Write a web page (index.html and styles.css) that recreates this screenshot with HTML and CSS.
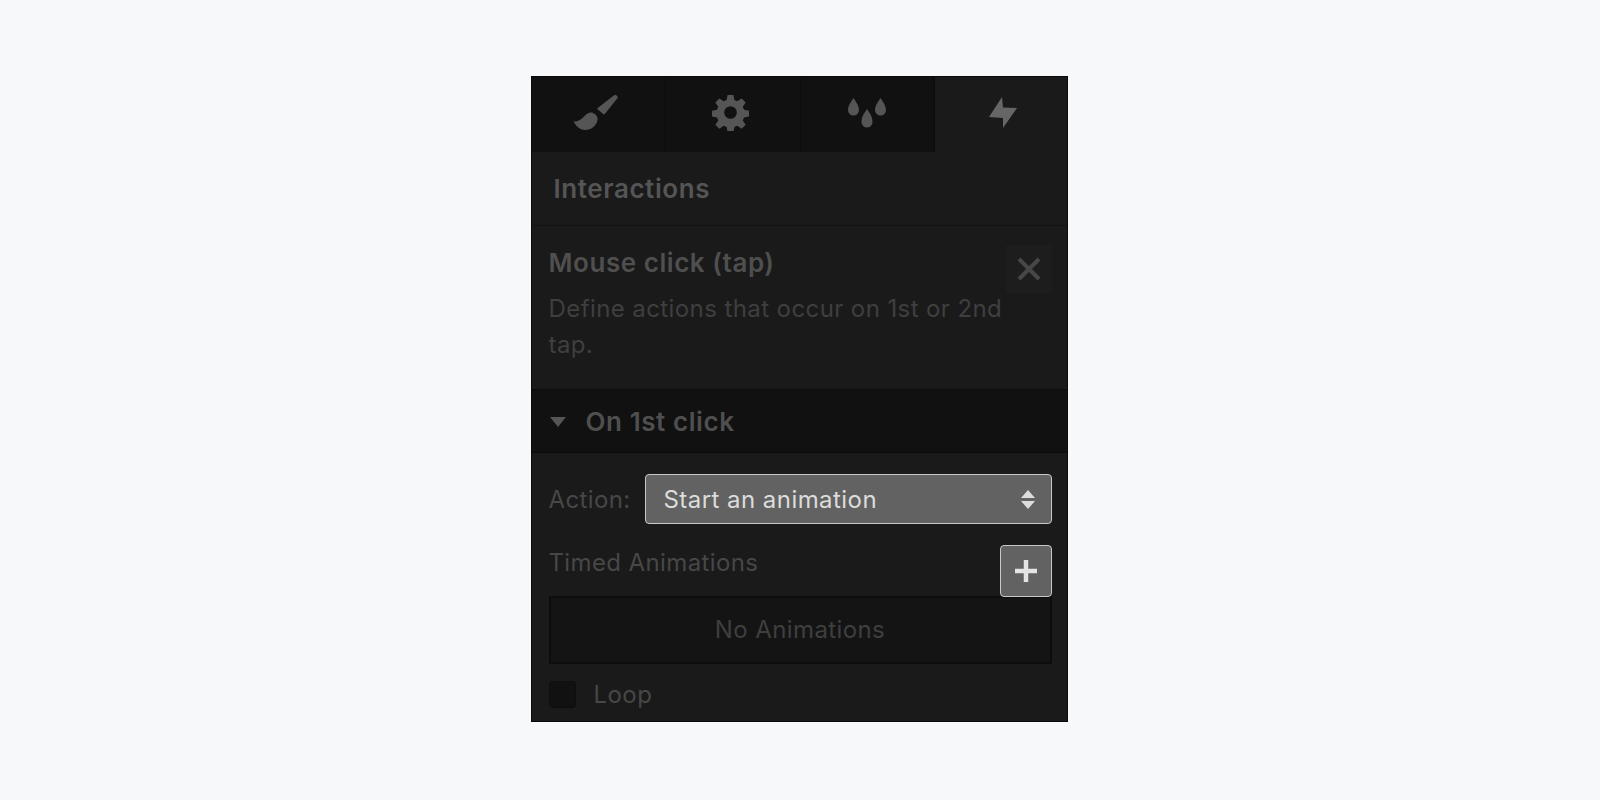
FILE: index.html
```html
<!DOCTYPE html>
<html lang="en">
<head>
<meta charset="utf-8">
<title>Interactions panel</title>
<link rel="stylesheet" href="styles.css">
</head>
<body>
<div class="panel">
  <div class="tabs">
    <div class="tab">
      <svg class="icon icon-brush" width="46" height="38" viewBox="0 0 46 38"><path d="M40.800 1.400c1.800-1.300 4.400.4 3.800 2.500-.1.300-.2.500-.4.700L31.800 20c-.4.500-1.100.6-1.600.1l-5.500-4.600c-.5-.4-.5-1.100 0-1.500z"/><path d="M.5 27.500C5 27.500 8 26 11 22.500c2.500-3 6-5 9-3.500 3 1.500 5 3.500 4.500 7C23.500 32 18 36 12 36 7 36 3 32 .5 27.500z"/></svg>
    </div>
    <div class="tab">
      <svg class="icon icon-gear" width="37" height="37" viewBox="0 0 38 38"><path fill-rule="evenodd" d="M16 1h6l1 5.200 3 1.300 4.400-3 4.200 4.200-3 4.400 1.300 3 5.100 1v6l-5.100 1-1.300 3 3 4.400-4.200 4.200-4.400-3-3 1.300-1 5h-6l-1-5-3-1.300-4.400 3-4.200-4.200 3-4.400-1.300-3-5.100-1v-6l5.100-1 1.300-3-3-4.400 4.200-4.200 4.400 3 3-1.300zM19 12.500a6.500 6.500 0 1 0 0 13 6.500 6.500 0 0 0 0-13z"/></svg>
    </div>
    <div class="tab">
      <svg class="icon" width="40" height="32" viewBox="0 0 40 32"><path d="M6.500 1c1.500 2.800 5.500 7 5.500 12a5.500 5.500 0 0 1-11 0C1 8 5 3.800 6.500 1z"/><path d="M33.500 1c1.500 2.800 5.500 7 5.500 12a5.500 5.500 0 0 1-11 0c0-5 4-9.200 5.500-12z"/><path d="M20 12c1.500 2.800 5.500 6.500 5.500 13a5.500 5.500 0 0 1-11 0c0-6.500 4-10.200 5.500-13z"/></svg>
    </div>
    <div class="tab tab-active">
      <svg class="icon icon-bright" width="28" height="33" viewBox="0 0 28 33"><path d="M13 1l1 10.500 14 .5L14 32V22L0 21z"/></svg>
    </div>
  </div>

  <div class="panel-title">Interactions</div>

  <div class="trigger">
    <div class="trigger-name">Mouse click (tap)</div>
    <p class="trigger-desc">Define actions that occur on 1st or 2nd tap.</p>
    <div class="close">
      <svg width="24" height="24" viewBox="0 0 24 24"><path d="M2 2l20 20M22 2L2 22"/></svg>
    </div>
  </div>

  <div class="click-head">
    <span class="caret"></span>
    <span class="click-label">On 1st click</span>
  </div>

  <div class="body">
    <div class="action-row">
      <span class="action-label">Action:</span>
      <div class="select">
        <span>Start an animation</span>
        <span class="updown"><span class="up"></span><span class="down"></span></span>
      </div>
    </div>
    <div class="timed-label">Timed Animations</div>
    <div class="add">
      <svg width="26" height="26" viewBox="0 0 26 26"><path d="M13 2v22M2 13h22"/></svg>
    </div>
    <div class="empty">No Animations</div>
    <div class="loop-row">
      <span class="checkbox"></span>
      <span class="loop-label">Loop</span>
    </div>
  </div>
</div>
</body>
</html>
```
FILE: styles.css
```css
* { box-sizing: border-box; }
html, body { margin: 0; height: 100%; }
body {
  background: #f7f8fa;
  display: flex;
  align-items: center;
  justify-content: center;
  font-family: Inter, "Liberation Sans", sans-serif;
  padding: 0 2px 2px 0;
}
.panel {
  width: 537px;
  height: 646px;
  background: #1a1a1a;
  border: 1px solid #0a0a0a;
  display: flex;
  flex-direction: column;
  overflow: hidden;
}
.tabs { display: flex; height: 75px; flex: none; }
.tab {
  width: 134.500px;
  background: #111;
  border-right: 1px solid #0c0c0c;
  padding-bottom: 4px;
  display: flex;
  align-items: center;
  justify-content: center;
}
.tab-active { background: #1a1a1a; border-right: 0; flex: 1; padding-left: 4px; }
.icon { fill: #555; display: block; }
.icon-brush { margin-right: 4px; }
.icon-gear { margin-right: 4px; }
.icon-bright { fill: #666; }
.panel-title {
  height: 74px;
  flex: none;
  padding: 0 0 1px 22px;
  display: flex;
  align-items: center;
  font-size: 26px;
  font-weight: 600;
  letter-spacing: .58px;
  color: #555;
  border-bottom: 1px solid #121212;
}
.trigger {
  position: relative;
  height: 164px;
  flex: none;
  padding: 19px 60px 0 17px;
  border-bottom: 1px solid #0d0d0d;
}
.trigger-name { font-size: 26px; font-weight: 600; letter-spacing: .55px; color: #4f4f4f; line-height: 36px; }
.trigger-desc { margin: 10px 0 0; font-size: 24px; letter-spacing: .41px; line-height: 36px; color: #3f3f3f; }
.close {
  position: absolute;
  top: 19px;
  right: 15px;
  width: 46px;
  height: 48px;
  background: #1d1d1d;
  display: flex;
  align-items: center;
  justify-content: center;
}
.close svg { stroke: #474747; stroke-width: 4; fill: none; }
.click-head {
  height: 63px;
  flex: none;
  background: #111;
  border-bottom: 1px solid #0a0a0a;
  padding: 1px 0 0 18px;
  display: flex;
  align-items: center;
  gap: 20px;
}
.caret {
  width: 0;
  height: 0;
  border-left: 8.500px solid transparent;
  border-right: 8.500px solid transparent;
  border-top: 10px solid #555;
}
.click-label { font-size: 26px; font-weight: 600; letter-spacing: .58px; color: #4f4f4f; }
.body { position: relative; flex: 1; padding: 21px 15px 0 17px; }
.action-row { display: flex; align-items: center; gap: 14px; }
.action-label { font-size: 24px; letter-spacing: .37px; color: #474747; }
.select {
  flex: 1;
  height: 50px;
  background: #626262;
  border: 1px solid #c8c8c8;
  border-radius: 4px;
  color: #dcdcdc;
  font-size: 24px;
  letter-spacing: .45px;
  padding: 0 16px 0 18px;
  display: flex;
  align-items: center;
  justify-content: space-between;
}
.updown { display: flex; flex-direction: column; gap: 3px; }
.up, .down { width: 0; height: 0; border-left: 7px solid transparent; border-right: 7px solid transparent; }
.up { border-bottom: 8px solid #ddd; }
.down { border-top: 8px solid #ddd; }
.timed-label { margin-top: 21px; height: 51px; font-size: 24px; letter-spacing: .38px; line-height: 36px; color: #474747; }
.add {
  position: absolute;
  top: 92px;
  right: 15px;
  width: 52px;
  height: 52px;
  background: #626262;
  border: 1px solid #c8c8c8;
  border-radius: 4px;
  display: flex;
  align-items: center;
  justify-content: center;
}
.add svg { stroke: #e4e4e4; stroke-width: 4.500; fill: none; }
.empty {
  height: 68px;
  background: #141414;
  border: 2px solid #0d0d0d;
  padding-bottom: 2px;
  display: flex;
  align-items: center;
  justify-content: center;
  font-size: 24px;
  letter-spacing: .4px;
  color: #3f3f3f;
}
.loop-row { display: flex; align-items: center; gap: 18px; margin-top: 16px; }
.checkbox { width: 27px; height: 27px; background: #111; border-radius: 4px; border: 1px solid #0e0e0e; }
.loop-label { font-size: 24px; letter-spacing: .45px; color: #474747; }
```
